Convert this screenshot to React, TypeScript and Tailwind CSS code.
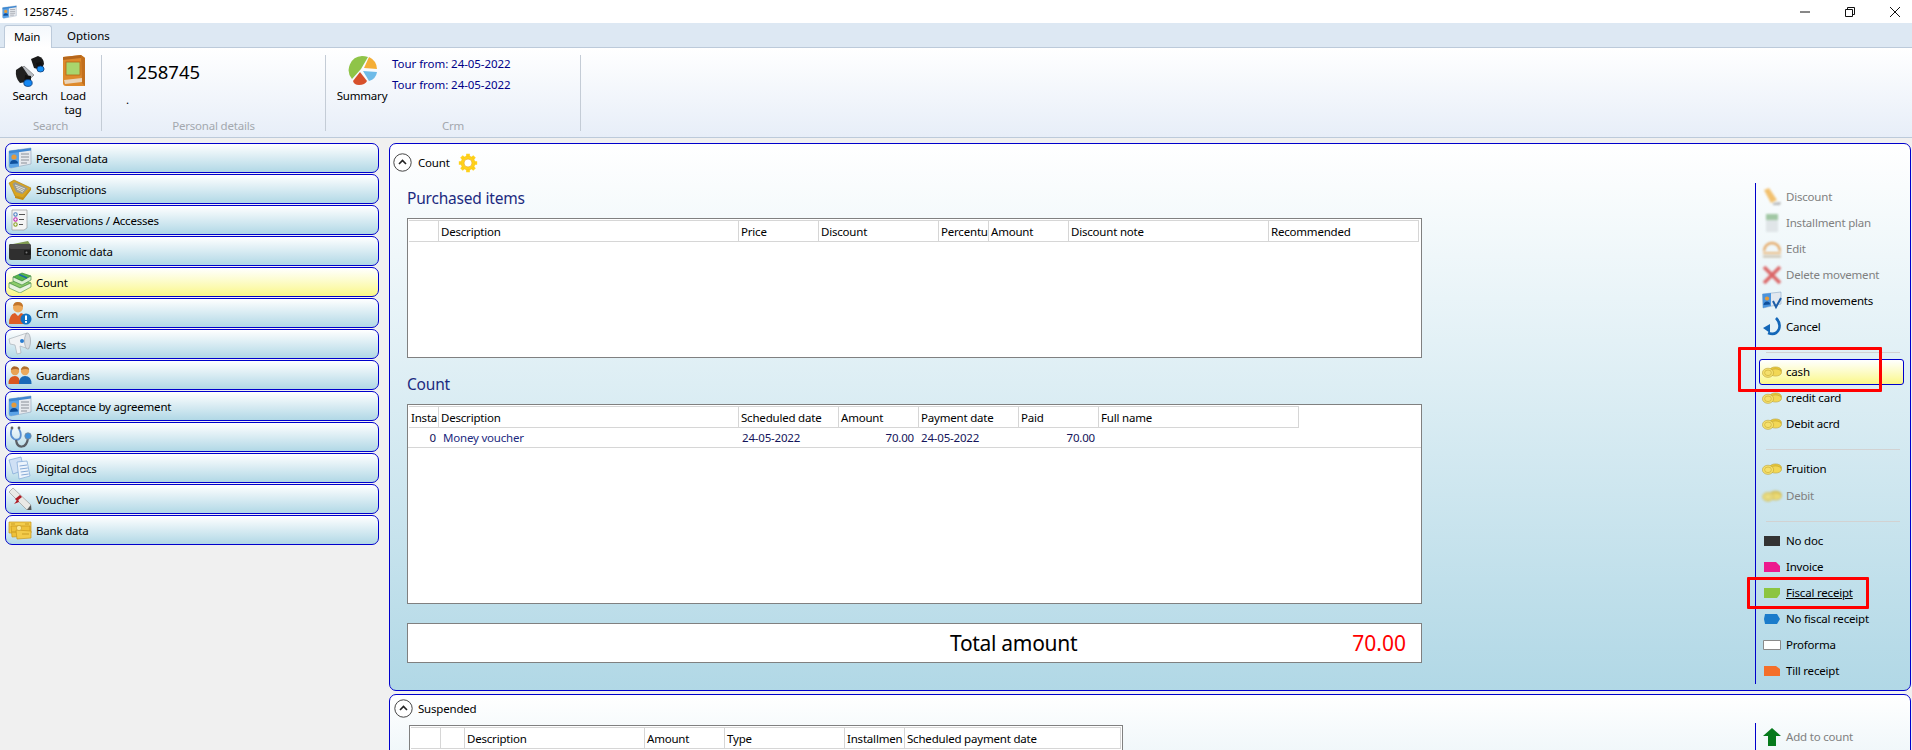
import React from "react";

type IC = { className?: string };

const CardIcon = ({ className = "w-[24px] h-[22px]" }: IC) => (
  <svg viewBox="0 0 24 22" className={className}>
    <path d="M1 4 L23 1 V17 L3 21 Q1 21 1 19 Z" fill="#e6e9ee" stroke="#8fa3b8" strokeWidth=".6" />
    <path d="M1 4 L11 2.6 V19.4 L3 21 Q1 21 1 19 Z" fill="#5aa2e6" />
    <path d="M1 4 L23 1 V3.5 L1 6.5 Z" fill="#3f87d0" />
    <circle cx="6" cy="10" r="2.6" fill="#e39a3b" />
    <path d="M2 17 Q2 13 6 13 Q10 13 10 16.5 Z" fill="#0e4f9c" />
    <path d="M13 7 H21 M13 10 H21 M13 13 H21 M13 16 H19" stroke="#8a8f98" strokeWidth="1" />
  </svg>
);
const TrayIcon = () => (
  <svg viewBox="0 0 24 22" className="w-[24px] h-[22px]">
    <path d="M1 5 L6 2 L23 10 L15 20 L7 18 Z" fill="#d9a520" stroke="#a97c10" strokeWidth=".6" />
    <path d="M4.5 6 L7 4 L20 10.5 L14.5 16 L8 14 Z" fill="#9a9a8e" />
    <path d="M7 7 L17 11 M8 9 L16 12.5 M9 11 L15 14" stroke="#e4e4dc" strokeWidth=".9" />
    <path d="M7 18 L15 20 L23 10 L23 12 L15 22 L7 20 Z" fill="#c48d10" />
  </svg>
);
const ListIcon = () => (
  <svg viewBox="0 0 24 24" className="w-[24px] h-[24px]">
    <path d="M4 2 H19 V20 L16 22 H4 Z" fill="#f4f4f4" stroke="#9a9a9a" strokeWidth=".7" />
    <circle cx="7.5" cy="6.5" r="1.7" fill="none" stroke="#4d7fc4" strokeWidth="1.1" />
    <circle cx="7.5" cy="11.5" r="1.7" fill="none" stroke="#c02ab0" strokeWidth="1.1" />
    <circle cx="7.5" cy="16.5" r="1.7" fill="none" stroke="#8aa020" strokeWidth="1.1" />
    <path d="M11 6.5 H17 M11 11.5 H16 M11 16.5 H15" stroke="#444" strokeWidth=".9" />
  </svg>
);
const WalletIcon = () => (
  <svg viewBox="0 0 24 22" className="w-[24px] h-[22px]">
    <path d="M5 4 L20 1 L22 4 Z" fill="#7f9a52" />
    <rect x="1" y="4" width="22" height="16" rx="2" fill="#2f2f2f" />
    <rect x="1" y="4" width="22" height="5" rx="2" fill="#494949" />
    <rect x="16" y="10" width="7" height="5" rx="1" fill="#1c1c1c" />
    <circle cx="18.5" cy="12.5" r="1" fill="#777" />
  </svg>
);
const MoneyIcon = () => (
  <svg viewBox="0 0 24 22" className="w-[24px] h-[22px]">
    <path d="M1 12 L13 8 L23 12 L12 17 Z" fill="#8dcb6a" stroke="#3e8a3c" strokeWidth=".6" />
    <path d="M1 12 V17 L12 22 L23 16 V12 L12 17 Z" fill="#e9f3e2" stroke="#3e8a3c" strokeWidth=".6" />
    <path d="M5 6 L14 2 L23 5 L14 10 Z" fill="#56b84a" stroke="#2f7d36" strokeWidth=".6" />
    <path d="M5 6 V10 L14 14 L23 9 V5 L14 10 Z" fill="#dcefd3" stroke="#2f7d36" strokeWidth=".6" />
    <path d="M11 3.5 L19 7" stroke="#1b6aa8" strokeWidth="1.4" />
  </svg>
);
const PersonAlertIcon = () => (
  <svg viewBox="0 0 24 24" className="w-[24px] h-[24px]">
    <circle cx="10" cy="6.5" r="5" fill="#eda95a" />
    <path d="M5 5 Q6 0.5 10 1 Q15 1 15 6 Q12 3 5 5Z" fill="#c2752a" />
    <path d="M1 23 Q1 13 7 12 L10 15 L13 12 Q17 13 18 18 V23 Z" fill="#dd5d26" />
    <circle cx="18" cy="18" r="5.5" fill="#1272c4" />
    <rect x="17" y="14.5" width="2" height="4.5" fill="#fff" />
    <rect x="17" y="20" width="2" height="1.8" fill="#fff" />
  </svg>
);
const MegaphoneIcon = () => (
  <svg viewBox="0 0 24 24" className="w-[24px] h-[24px]">
    <path d="M1 7 L19 1 L21 17 L12 14 L13 21 L9 22 L7 13 L2 12 Z" fill="#f1f3f5" stroke="#a9b0b8" strokeWidth=".7" />
    <ellipse cx="19.5" cy="9" rx="3" ry="8" fill="#d9dde1" stroke="#9fa6ae" strokeWidth=".7" />
    <circle cx="14" cy="9" r="2" fill="#2a7cd0" />
  </svg>
);
const GuardiansIcon = () => (
  <svg viewBox="0 0 24 20" className="w-[24px] h-[20px]">
    <circle cx="7" cy="6" r="4.2" fill="#e8a254" />
    <path d="M2.8 5 Q4 1 7 1.4 Q11 1.4 11.2 5 Q8 3 2.8 5Z" fill="#a9622a" />
    <path d="M0.5 19 Q0.5 11 7 11 Q12 11 12 19 Z" fill="#d9551f" />
    <circle cx="17" cy="6" r="4.2" fill="#eba95e" />
    <path d="M12.8 5 Q14 1 17 1.4 Q21 1.4 21.2 5 Q18 3 12.8 5Z" fill="#b3702d" />
    <path d="M11 19 Q11 11 17 11 Q23.5 11 23.5 19 Z" fill="#1a69b8" />
  </svg>
);
const StethoIcon = () => (
  <svg viewBox="0 0 24 22" className="w-[24px] h-[22px]">
    <path d="M4 2 Q1 10 6 13 Q10 15 12 12 Q14 8 11 3" fill="none" stroke="#5b8fd0" strokeWidth="1.8" />
    <path d="M8 14 Q9 21 14 20.5 Q19 20 20 12" fill="none" stroke="#5a5f66" strokeWidth="2.2" />
    <circle cx="4" cy="2" r="1.4" fill="#666" />
    <circle cx="11" cy="2" r="1.4" fill="#666" />
    <circle cx="20" cy="10" r="3.2" fill="#3d8fdc" stroke="#7f8a94" strokeWidth=".8" />
  </svg>
);
const DocsIcon = () => (
  <svg viewBox="0 0 24 24" className="w-[24px] h-[24px]">
    <path d="M1 4 L13 1 L16 14 L5 18 Z" fill="#cfe0f5" stroke="#7ea6d6" strokeWidth=".7" />
    <path d="M9 6 L19 5 L22 20 L11 23 Z" fill="#edf4fc" stroke="#7ea6d6" strokeWidth=".7" />
    <path d="M11.5 10 L19 9 M12 13 L19.8 12 M12.7 16 L20.3 15 M13.3 19 L20.7 18" stroke="#6b95cb" strokeWidth=".8" />
  </svg>
);
const ScrollIcon = () => (
  <svg viewBox="0 0 24 24" className="w-[24px] h-[24px]">
    <path d="M1 5 L5 1 L23 18 L19 23 Z" fill="#e9e9e6" stroke="#9a9a96" strokeWidth=".7" />
    <path d="M19 23 L23 18 L23.5 23 Z" fill="#555" />
    <path d="M7 12 L12 8 L14 10 L9 14 Z" fill="#b01c26" />
    <path d="M10 12 L6 17 L11 15 Z" fill="#b01c26" />
  </svg>
);
const BanknoteIcon = () => (
  <svg viewBox="0 0 24 20" className="w-[24px] h-[20px]">
    <path d="M1 2 H23 V13 H1 Z" fill="#f3cd4d" stroke="#c9971b" strokeWidth=".7" />
    <path d="M3 6 L22 6 L22 16 L4 17 Z" fill="#eec13a" stroke="#c9971b" strokeWidth=".7" />
    <path d="M8 10 L23 11 V18 L9 19 Z" fill="#f3cb4a" stroke="#c9971b" strokeWidth=".7" />
    <circle cx="11" cy="8" r="2.6" fill="#fbe793" stroke="#b98a12" strokeWidth=".5" />
    <path d="M3 4 H7 M17 4 H21 M14 14 H21 M4 12 H8" stroke="#b98a12" strokeWidth=".7" />
  </svg>
);
const BinocularsIcon = () => (
  <svg viewBox="0 0 30 32" className="w-[30px] h-[32px]">
    <path d="M9 11 L19 20 L16 23 L6 14 Z" fill="#b8bcc2" stroke="#555" strokeWidth=".5" />
    <path d="M16 4 L23 1 Q29 3 29 9 L26 15 L19 13 Z" fill="#1a1a1a" />
    <path d="M1 15 L7 11 L13 20 L11 27 L5 28 Q0 23 1 15 Z" fill="#202020" />
    <path d="M10 20 L16 21 L16 30 Q12 32 9 30 Z" fill="#111" />
    <ellipse cx="13" cy="28" rx="4.2" ry="3.4" fill="#1487f3" stroke="#0a3a78" strokeWidth=".8" />
    <path d="M21 8 L26 7 L28 13 L24 16 Z" fill="#111" />
    <ellipse cx="25.5" cy="14" rx="3.6" ry="3" fill="#1892f6" stroke="#0a3a78" strokeWidth=".8" />
  </svg>
);
const BookIcon = () => (
  <svg viewBox="0 0 23 32" className="w-[23px] h-[32px]">
    <path d="M1 2 L19 0 L23 3 V31 L4 31 Q1 31 1 28 Z" fill="#de8a2c" />
    <path d="M19 0 L23 3 V31 L20 28 Z" fill="#c26f1d" />
    <path d="M1 2 L19 0 V3 L1 5 Z" fill="#b5661c" />
    <rect x="4" y="7" width="14" height="13" fill="#a9d56d" stroke="#b36716" strokeWidth=".8" />
    <path d="M2 25 L20 23 V27 L3 29 Z" fill="#e9d4ba" />
  </svg>
);
const PieIcon = () => (
  <svg viewBox="0 0 31 31" className="w-[31px] h-[31px]">
    <path d="M15 1 A14 14 0 0 0 5 24 L14 14 L21 2 Q18 1 15 1 Z" fill="#8fc448" />
    <path d="M22 2 A14 14 0 0 1 30 14 L17 13 Z" fill="#f4ae36" />
    <path d="M16 16 L30 17 Q29 24 22 26 Z" fill="#6fbbe8" />
    <path d="M6 26 L13 17 L20 26 Q18 30 12 30 Q7 30 6 26 Z" fill="#d7502b" />
  </svg>
);
const Gear = () => (
  <svg viewBox="0 0 24 24" className="w-[20px] h-[20px]">
    <g stroke="#ffd21a" strokeWidth="4.4">
      <path d="M12 1 V23 M1 12 H23 M4.2 4.2 L19.8 19.8 M19.8 4.2 L4.2 19.8" />
    </g>
    <circle cx="12" cy="12" r="8.4" fill="#ffd21a" stroke="#f2bd1b" strokeWidth=".6" />
    <circle cx="12" cy="12" r="4.8" fill="#fff" stroke="#eaa91f" strokeWidth=".8" />
  </svg>
);
const Collapse = () => (
  <svg viewBox="0 0 19 19" className="w-[19px] h-[19px] shrink-0">
    <circle cx="9.5" cy="9.5" r="8.7" fill="#fff" stroke="#444" strokeWidth="1" />
    <path d="M6 11 L9.5 7.5 L13 11" fill="none" stroke="#222" strokeWidth="1.6" />
  </svg>
);
const Coins = ({ off }: { off?: boolean }) => (
  <svg viewBox="0 0 20 12" className={off ? "w-[20px] h-[12px] blur-[1px] opacity-80" : "w-[20px] h-[12px]"}>
    <ellipse cx="13.5" cy="4.5" rx="6" ry="3.6" fill="#e9c93a" stroke="#b5972a" strokeWidth=".5" />
    <ellipse cx="13.5" cy="6.5" rx="6" ry="3.6" fill="#f2d755" stroke="#b5972a" strokeWidth=".5" />
    <ellipse cx="6" cy="6.8" rx="5.6" ry="4.6" fill="#f5e06c" stroke="#b5972a" strokeWidth=".5" />
    <ellipse cx="6" cy="6.8" rx="3.4" ry="2.8" fill="none" stroke="#c5a733" strokeWidth=".6" />
  </svg>
);
const Tag = ({ color, d, stroke }: { color: string; d: string; stroke?: string }) => (
  <svg viewBox="0 0 18 10" className="w-[18px] h-[10px]">
    <path d={d} fill={color} stroke={stroke ?? "none"} strokeWidth="1" />
  </svg>
);
const Wrapper = ({ children, off }: { children: React.ReactNode; off?: boolean }) => (
  <span className={off ? "w-[20px] flex items-center justify-center shrink-0 blur-[1px] opacity-70" : "w-[20px] flex items-center justify-center shrink-0"}>{children}</span>
);
const DiscountIcon = () => (
  <svg viewBox="0 0 20 20" className="w-[20px] h-[20px]">
    <path d="M2 3 L7 1 L15 13 L9 16 Z" fill="#f0a832" />
    <path d="M11 16 L19 15 L18 18 L11 18 Z" fill="#999" />
  </svg>
);
const PlanIcon = () => (
  <svg viewBox="0 0 20 20" className="w-[20px] h-[20px]">
    <rect x="4" y="1" width="12" height="18" fill="#d8dde0" />
    <rect x="4" y="1" width="12" height="6" fill="#7eb27f" />
  </svg>
);
const EditIcon = () => (
  <svg viewBox="0 0 20 20" className="w-[20px] h-[20px]">
    <path d="M2 12 A8 8 0 0 1 18 12" fill="none" stroke="#e08a2c" strokeWidth="2.4" />
    <rect x="1" y="13" width="18" height="2" fill="#e8a351" />
    <rect x="1" y="16.5" width="18" height="2" fill="#b5a384" />
  </svg>
);
const DeleteIcon = () => (
  <svg viewBox="0 0 20 20" className="w-[20px] h-[20px]">
    <path d="M2 2 L18 18 M18 2 L2 18" stroke="#d42a2a" strokeWidth="3.6" />
  </svg>
);
const FindIcon = () => (
  <svg viewBox="0 0 20 20" className="w-[20px] h-[20px]">
    <path d="M0.5 3 L19 1 V13 L1 17 Z" fill="#e2e8ef" stroke="#7b9cc0" strokeWidth=".5" />
    <path d="M0.5 3 L9 2 V15 L1 17 Z" fill="#4a94de" />
    <circle cx="5" cy="7.5" r="2.1" fill="#e39a3b" />
    <path d="M1.5 14 Q2 10.5 5 10.5 Q8 10.5 8 13.5 Z" fill="#0e4f9c" />
    <path d="M11 10 L14 16 L19 7" fill="none" stroke="#1e5ea8" strokeWidth="2" />
  </svg>
);
const CancelIcon = () => (
  <svg viewBox="0 0 20 20" className="w-[20px] h-[20px]">
    <path d="M14 1 Q19 6 17 12 Q14 19 6 16" fill="none" stroke="#1467b8" strokeWidth="2.6" />
    <path d="M1 11 L8 7 L8 16 Z" fill="#1467b8" />
  </svg>
);
const AddIcon = () => (
  <svg viewBox="0 0 20 20" className="w-[20px] h-[20px] blur-[0.7px]">
    <path d="M10 1 L19 9 H14 V19 H6 V9 H1 Z" fill="#067a1c" />
  </svg>
);

const navItems: { label: string; icon: React.ReactNode; active?: boolean }[] = [
  { label: "Personal data", icon: <CardIcon /> },
  { label: "Subscriptions", icon: <TrayIcon /> },
  { label: "Reservations / Accesses", icon: <ListIcon /> },
  { label: "Economic data", icon: <WalletIcon /> },
  { label: "Count", icon: <MoneyIcon />, active: true },
  { label: "Crm", icon: <PersonAlertIcon /> },
  { label: "Alerts", icon: <MegaphoneIcon /> },
  { label: "Guardians", icon: <GuardiansIcon /> },
  { label: "Acceptance by agreement", icon: <CardIcon /> },
  { label: "Folders", icon: <StethoIcon /> },
  { label: "Digital docs", icon: <DocsIcon /> },
  { label: "Voucher", icon: <ScrollIcon /> },
  { label: "Bank data", icon: <BanknoteIcon /> },
];

function NavButton({ label, icon, active }: { label: string; icon: React.ReactNode; active?: boolean }) {
  return (
    <div
      className={
        active
          ? "h-[30px] w-[374px] shrink-0 rounded-[7px] border border-[#0000cc] bg-gradient-to-b from-white to-[#fbf785] flex items-center pl-[2px]"
          : "h-[30px] w-[374px] shrink-0 rounded-[7px] border border-[#0000cc] bg-gradient-to-b from-white to-[#b1d8e6] flex items-center pl-[2px]"
      }
    >
      <span className="w-[24px] h-[26px] flex items-center justify-center shrink-0">{icon}</span>
      <span className="ml-[4px] pt-[1px]">{label}</span>
    </div>
  );
}

function ToolItem({ label, icon, off, active, underline, iconOff }: { label: string; icon: React.ReactNode; off?: boolean; active?: boolean; underline?: boolean; iconOff?: boolean }) {
  return (
    <div
      className={
        active
          ? "ml-[3px] w-[145px] h-[26px] shrink-0 rounded-[3px] border border-[#0000cc] bg-gradient-to-b from-white to-[#fbf785] flex items-center pl-[2px] gap-[4px]"
          : "ml-[3px] w-[145px] h-[26px] shrink-0 border border-transparent flex items-center pl-[2px] gap-[4px]"
      }
    >
      <Wrapper off={iconOff}>{icon}</Wrapper>
      <span className={off ? "text-[#808080]" : underline ? "underline" : ""}>{label}</span>
    </div>
  );
}

const Separator = () => (
  <div className="h-[19px] shrink-0 pt-[12px] pl-[10px]">
    <div className="h-[1px] w-[134px] bg-[#d2d2d2]" />
  </div>
);

function Header({ cols }: { cols: [string, number][] }) {
  return (
    <div className="flex h-[22px] border-t border-[#d6d6d6] ml-[1px] mt-[1px] w-fit">
      {cols.map(([t, w], i) => (
        <div key={i} style={{ width: w }} className="h-[21px] border-b border-r border-[#d6d6d6] pl-[2px] pt-[1px] flex items-center whitespace-nowrap overflow-hidden shrink-0">
          {t}
        </div>
      ))}
    </div>
  );
}

const RibbonLabel = ({ children }: { children: React.ReactNode }) => (
  <div className="absolute left-0 right-0 -bottom-[2px] text-center text-[#a3a8ae] leading-[14px]">{children}</div>
);

export default function App() {
  return (
    <div className="relative w-[1912px] h-[750px] overflow-hidden bg-[#f0f0f0] flex flex-col text-black text-[11.5px] tracking-[-0.2px] leading-[14px] font-['Noto_Sans',sans-serif]">
      {/* title bar */}
      <div className="h-[23px] bg-white flex items-center shrink-0 pl-[2px]">
        <CardIcon className="w-[15px] h-[14px]" />
        <span className="ml-[6px]">1258745 .</span>
        <div className="ml-auto mr-[12px] flex items-center gap-[35px]">
          <svg viewBox="0 0 10 10" className="w-[10px] h-[10px]"><path d="M0 5 H10" stroke="#111" strokeWidth="1" /></svg>
          <svg viewBox="0 0 10 10" className="w-[10px] h-[10px]"><path d="M.5 2.5 H7.5 V9.5 H.5 Z M2.5 2.5 V.5 H9.5 V7.5 H7.5" fill="none" stroke="#111" strokeWidth="1" /></svg>
          <svg viewBox="0 0 10 10" className="w-[10px] h-[10px]"><path d="M0 0 L10 10 M10 0 L0 10" stroke="#111" strokeWidth="1" /></svg>
        </div>
      </div>
      {/* tabs */}
      <div className="h-[25px] bg-[#dde8f3] border-b border-[#bccada] flex items-end shrink-0 pl-[4px]">
        <div className="h-[23px] w-[48px] -mb-[1px] pr-[2px] bg-gradient-to-b from-[#f4f8fc] to-white border border-b-0 border-[#bccada] rounded-t-[3px] flex items-center justify-center">Main</div>
        <div className="h-[23px] ml-[15px] flex items-center tracking-normal">Options</div>
      </div>
      {/* ribbon */}
      <div className="h-[90px] shrink-0 bg-gradient-to-b from-white to-[#e7eef8] border-b border-[#bccada] flex pt-[7px]">
        <div className="relative w-[102px] h-[76px] border-r border-[#c4ccd6] flex pl-[12px]">
          <div className="w-[36px] flex flex-col items-center">
            <BinocularsIcon />
            <span className="mt-[2px]">Search</span>
          </div>
          <div className="ml-[12px] w-[26px] flex flex-col items-center text-center">
            <BookIcon />
            <span className="mt-[2px]">Load tag</span>
          </div>
          <RibbonLabel>Search</RibbonLabel>
        </div>
        <div className="relative w-[224px] h-[76px] border-r border-[#c4ccd6] pl-[24px]">
          <div className="mt-[4px] text-[18.5px] leading-[26px] tracking-normal">1258745</div>
          <div className="mt-[8px]">.</div>
          <RibbonLabel>Personal details</RibbonLabel>
        </div>
        <div className="relative w-[255px] h-[76px] border-r border-[#c4ccd6] flex pl-[10px]">
          <div className="w-[52px] flex flex-col items-center">
            <PieIcon />
            <span className="mt-[3px]">Summary</span>
          </div>
          <div className="ml-[4px] -mt-[2px] text-[#000088] tracking-[-0.05px]">
            <div className="h-[21px] flex items-center">Tour from: 24-05-2022</div>
            <div className="h-[21px] flex items-center">Tour from: 24-05-2022</div>
          </div>
          <RibbonLabel>Crm</RibbonLabel>
        </div>
      </div>
      {/* body */}
      <div className="flex-1 min-h-0 flex pt-[5px]">
        <div className="w-[389px] shrink-0 pl-[5px] flex flex-col gap-[1px]">
          {navItems.map((n) => (
            <NavButton key={n.label} {...n} />
          ))}
        </div>
        <div className="w-[1522px] shrink-0 flex flex-col">
          {/* Count panel */}
          <div className="h-[548px] shrink-0 rounded-[7px] border border-[#0000cc] bg-gradient-to-b from-white to-[#b1d8e6] flex">
            <div className="w-[1032px] shrink-0 pl-[17px]">
              <div className="h-[37px] -ml-[14px] flex items-center">
                <Collapse />
                <span className="ml-[6px]">Count</span>
                <span className="ml-[8px]"><Gear /></span>
              </div>
              <div className="mt-[5px] h-[24px] flex items-center text-[15.5px] text-[#1c2a80] tracking-[-0.2px]">Purchased items</div>
              <div className="mt-[8px] h-[140px] w-[1015px] bg-white border border-[#808080]">
                <Header cols={[["", 30], ["Description", 300], ["Price", 80], ["Discount", 120], ["Percentu", 50], ["Amount", 80], ["Discount note", 200], ["Recommended", 150]]} />
              </div>
              <div className="mt-[14px] h-[24px] flex items-center text-[15.5px] text-[#1c2a80] tracking-[-0.2px]">Count</div>
              <div className="mt-[8px] h-[200px] w-[1015px] bg-white border border-[#808080]">
                <Header cols={[["Insta", 30], ["Description", 300], ["Scheduled date", 100], ["Amount", 80], ["Payment date", 100], ["Paid", 80], ["Full name", 200]]} />
                <div className="flex h-[20px] pt-[1px] border-b border-[#d6d6d6] items-center text-[#14145a]">
                  <div className="w-[28px] text-right">0</div>
                  <div className="w-[306px] pl-[7px] text-[#1c2a80]">Money voucher</div>
                  <div className="w-[96px]">24-05-2022</div>
                  <div className="w-[76px] text-right">70.00</div>
                  <div className="w-[100px] pl-[7px]">24-05-2022</div>
                  <div className="w-[81px] text-right">70.00</div>
                </div>
              </div>
              <div className="mt-[19px] h-[40px] w-[1015px] bg-white border border-[#808080] flex items-center justify-between pl-[542px] pr-[15px] text-[21px] tracking-[-0.3px]">
                <span>Total amount</span>
                <span className="text-[#ff0000] tracking-normal">70.00</span>
              </div>
            </div>
            <div className="ml-[333px] mt-[39px] h-[501px] w-[155px] border-l border-[#0000cc] flex flex-col pt-[1px] shrink-0">
              <ToolItem label="Discount" icon={<DiscountIcon />} off iconOff />
              <ToolItem label="Installment plan" icon={<PlanIcon />} off iconOff />
              <ToolItem label="Edit" icon={<EditIcon />} off iconOff />
              <ToolItem label="Delete movement" icon={<DeleteIcon />} off iconOff />
              <ToolItem label="Find movements" icon={<FindIcon />} />
              <ToolItem label="Cancel" icon={<CancelIcon />} />
              <Separator />
              <ToolItem label="cash" icon={<Coins />} active />
              <ToolItem label="credit card" icon={<Coins />} />
              <ToolItem label="Debit acrd" icon={<Coins />} />
              <Separator />
              <ToolItem label="Fruition" icon={<Coins />} />
              <div className="h-[1px] shrink-0" />
              <ToolItem label="Debit" icon={<Coins off />} off />
              <Separator />
              <ToolItem label="No doc" icon={<Tag color="#333333" d="M1 0 H17 V10 H1 Z" />} />
              <ToolItem label="Invoice" icon={<Tag color="#ec1a8e" d="M1 0 H13 L17 4 V10 H1 Z" />} />
              <ToolItem label="Fiscal receipt" icon={<Tag color="#8cc540" d="M1 0 H17 V6 L14 10 H1 Z" />} underline />
              <ToolItem label="No fiscal receipt" icon={<Tag color="#1b7ccb" d="M2 0 H14 L17 5 L14 10 H2 L1 5 Z" />} />
              <ToolItem label="Proforma" icon={<Tag color="#ffffff" stroke="#8a8a8a" d="M.5 .5 H17.5 V9.5 H.5 Z" />} />
              <ToolItem label="Till receipt" icon={<Tag color="#f46f2a" d="M1 0 H13 L17 3 V10 H1 Z" />} />
            </div>
          </div>
          {/* Suspended panel */}
          <div className="mt-[3px] h-[60px] shrink-0 rounded-t-[7px] border border-[#0000cc] bg-gradient-to-b from-white to-[#f0f7fa] flex">
            <div className="w-[1032px] shrink-0 pl-[19px]">
              <div className="h-[27px] -ml-[15px] flex items-center">
                <Collapse />
                <span className="ml-[5px]">Suspended</span>
              </div>
              <div className="mt-[3px] h-[40px] w-[714px] bg-white border border-[#808080]">
                <Header cols={[["", 30], ["", 24], ["Description", 180], ["Amount", 80], ["Type", 120], ["Installmen", 60], ["Scheduled payment date", 216]]} />
              </div>
            </div>
            <div className="ml-[333px] mt-[28px] h-[40px] w-[155px] border-l border-[#0000cc] flex flex-col shrink-0 pt-[1px]">
              <ToolItem label="Add to count" icon={<AddIcon />} off />
            </div>
          </div>
        </div>
      </div>
      {/* annotations */}
      <div className="absolute left-[1738px] top-[347px] w-[144px] h-[45px] border-[3.5px] border-[#ff0000] rounded-[1px] pointer-events-none" />
      <div className="absolute left-[1747px] top-[577px] w-[122px] h-[32px] border-[3.5px] border-[#ff0000] rounded-[1px] pointer-events-none" />
    </div>
  );
}
